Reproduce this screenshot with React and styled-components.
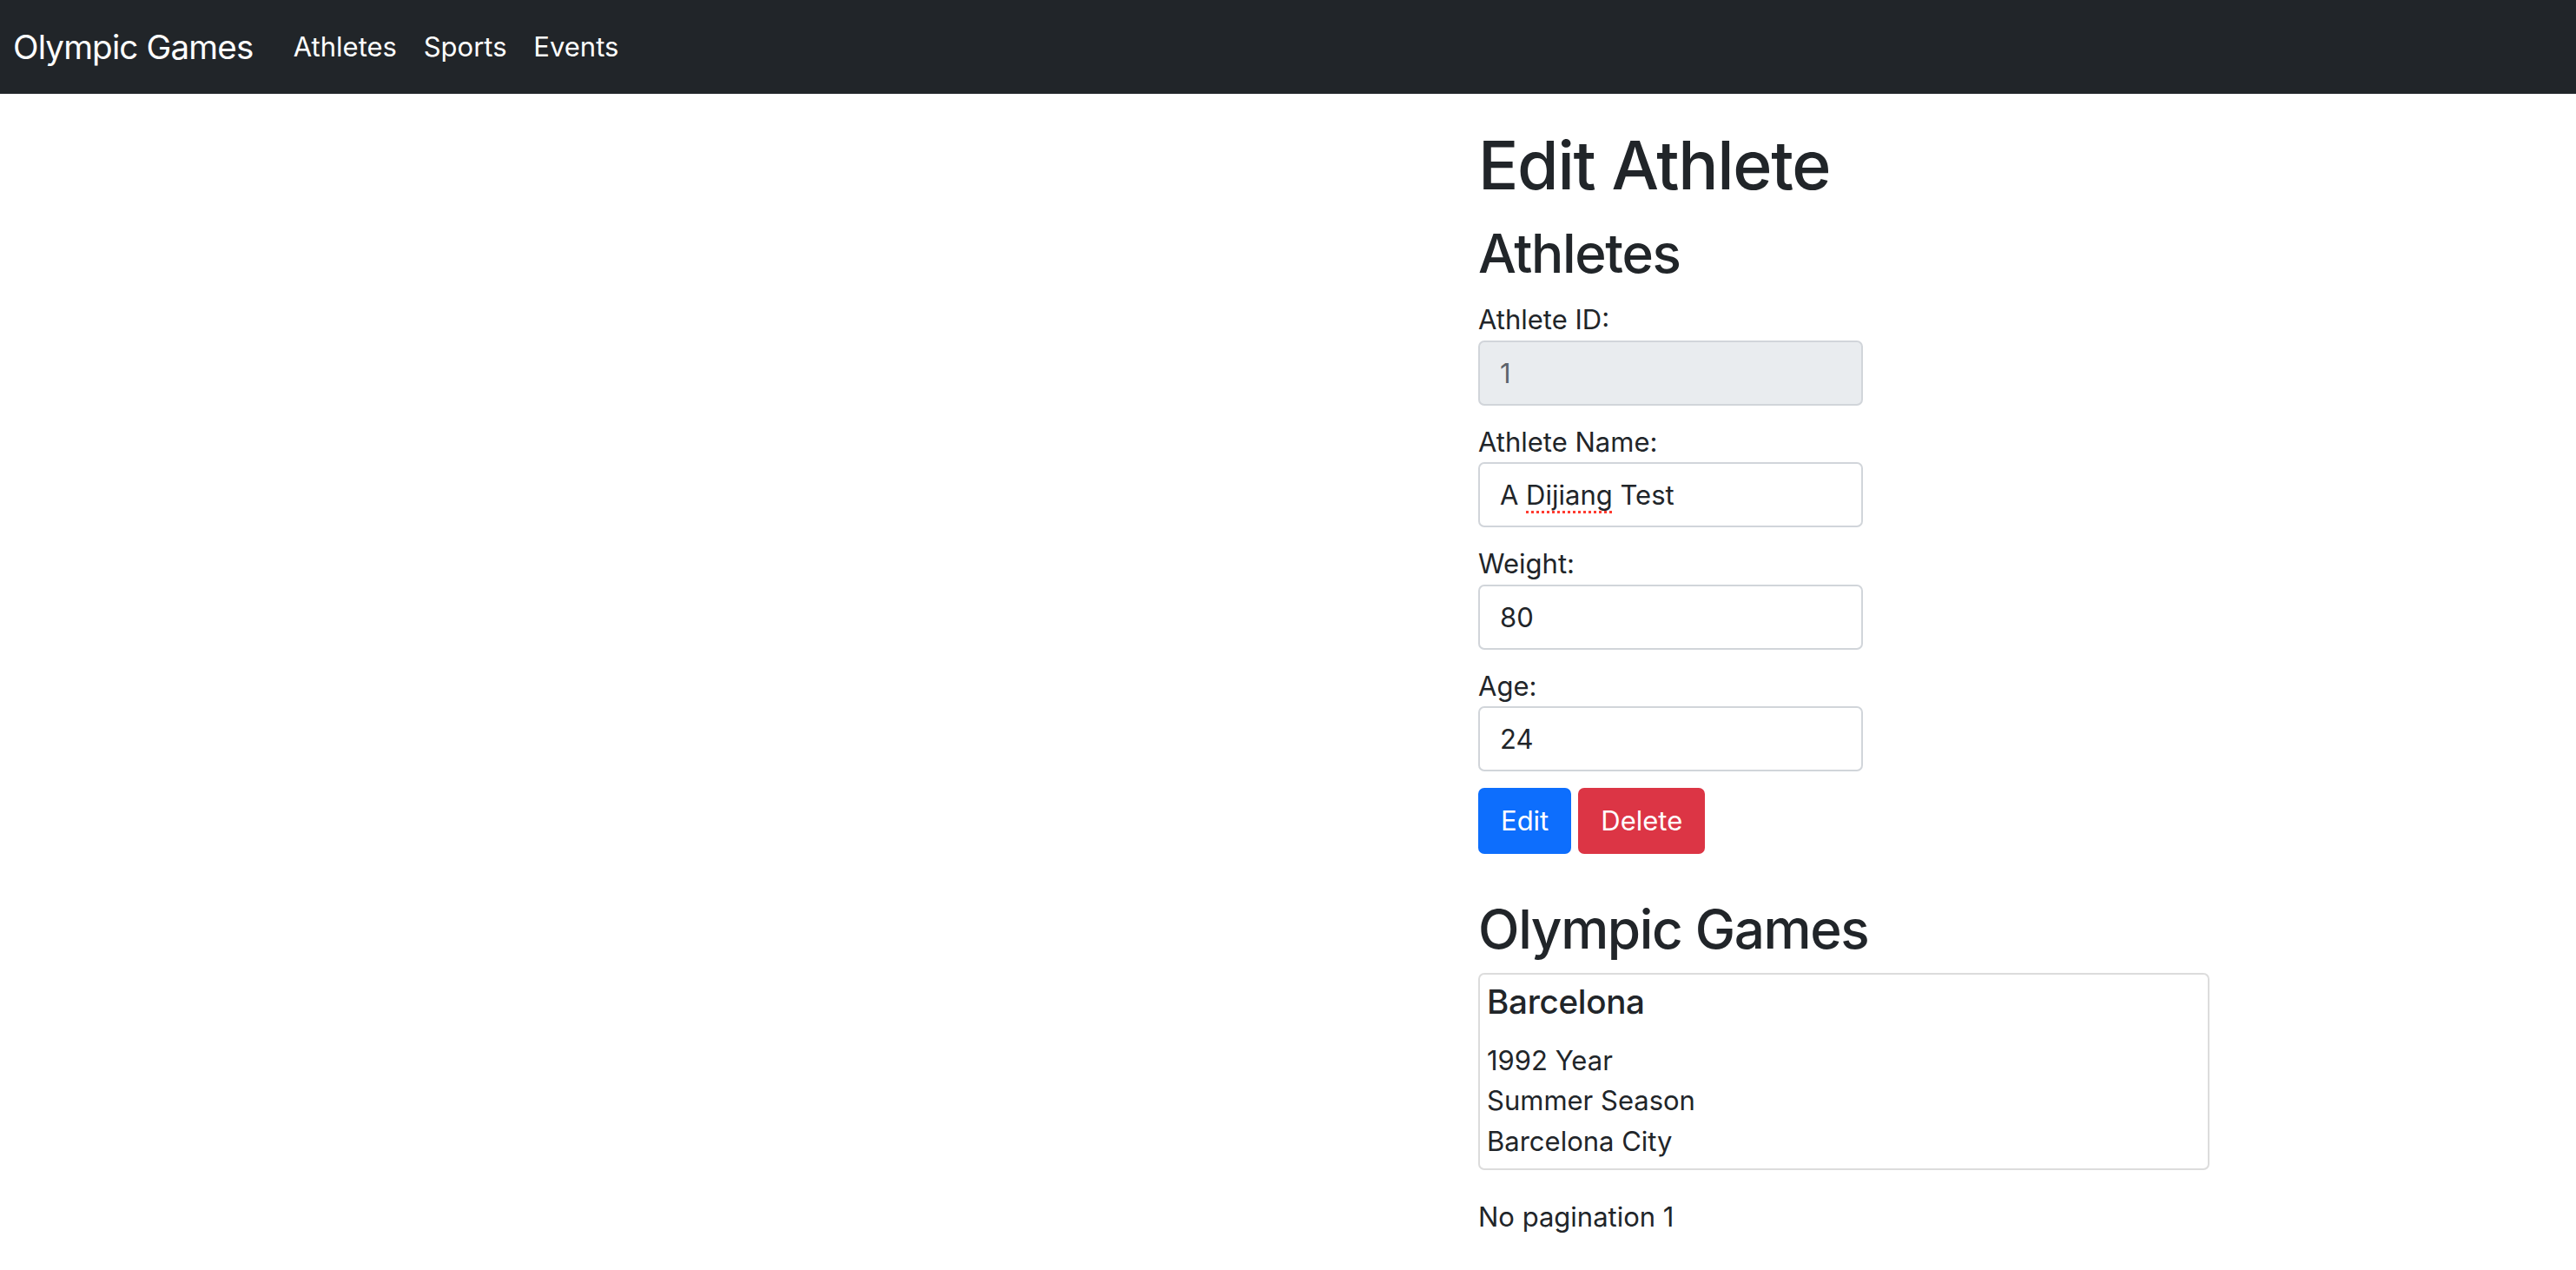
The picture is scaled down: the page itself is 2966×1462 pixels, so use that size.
import React from 'react'
import styled, { createGlobalStyle } from 'styled-components'

const GlobalStyle = createGlobalStyle`
  *, *::before, *::after {
    box-sizing: border-box;
  }

  body {
    margin: 0;
    background: #fff;
    color: #212529;
    font-family: Inter, "Liberation Sans", sans-serif;
    font-size: 31px;
    line-height: 1.5;
  }
`

const Navbar = styled.nav`
  display: flex;
  align-items: center;
  height: 108px;
  padding: 0 15px;
  background-color: #212529;
`

const Brand = styled.a`
  margin-right: 31px;
  color: #fff;
  font-size: 38.6px;
  line-height: 58px;
  letter-spacing: -0.022em;
  text-decoration: none;
`

const NavList = styled.ul`
  display: flex;
  margin: 0;
  padding: 0;
  list-style: none;
`

const NavLink = styled.a`
  display: block;
  padding: 0 15.4px;
  color: #fff;
  font-size: 31px;
  text-decoration: none;
`

const Main = styled.main`
  padding: 36px 0 40px 1702px;
`

const Title = styled.h1`
  margin: 0 0 19px;
  font-size: 77px;
  font-weight: 500;
  line-height: 1.2;
  letter-spacing: -0.017em;
`

const SectionTitle = styled.h2`
  margin: ${(props) => props.$top || 0}px 0 ${(props) => props.$bottom || 15.4}px;
  font-size: 62px;
  font-weight: 500;
  line-height: 1.2;
  letter-spacing: -0.022em;
`

const FieldGroup = styled.div`
  margin-bottom: 19px;
`

const Label = styled.label`
  display: block;
`

const ValueBox = styled.div`
  width: 443px;
  height: 75px;
  padding: 0 23px;
  border: 2px solid #d1d5da;
  border-radius: 7px;
  background-color: ${(props) => (props.$disabled ? '#e9ecef' : '#fff')};
  color: ${(props) => (props.$disabled ? '#5c636a' : '#212529')};
  line-height: 71px;
  white-space: pre;
`

const Misspelled = styled.span`
  text-decoration: underline dotted #ff3b30;
  text-decoration-thickness: 3px;
  text-underline-offset: 7px;
`

const ButtonRow = styled.div`
  display: flex;
  gap: 8px;
  margin-top: 1px;
`

const Button = styled.button`
  height: 76px;
  padding: 0 24px;
  border: 2px solid ${(props) => props.$color};
  border-radius: 7px;
  background-color: ${(props) => props.$color};
  color: #fff;
  font-family: inherit;
  font-size: 31px;
  line-height: 1.5;
  cursor: pointer;
`

const Card = styled.div`
  width: 842px;
  padding: 8px;
  border: 2px solid #dcdcdc;
  border-radius: 7px;
`

const CardTitle = styled.h5`
  margin: 0 0 22px;
  font-size: 38.6px;
  font-weight: 500;
  line-height: 1.2;
  letter-spacing: -0.008em;
`

const CardLine = styled.div`
  line-height: 1.5;
`

const Pagination = styled.p`
  margin: 31px 0 0;
`

const fields = [
  { label: 'Athlete ID:', value: '1', disabled: true },
  {
    label: 'Athlete Name:',
    value: (
      <>
        A <Misspelled>Dijiang</Misspelled> Test
      </>
    ),
  },
  { label: 'Weight:', value: '80' },
  { label: 'Age:', value: '24' },
]

const App = () => {
  return (
    <>
      <GlobalStyle />
      <Navbar>
        <Brand href="#">Olympic Games</Brand>
        <NavList>
          <li>
            <NavLink href="#">Athletes</NavLink>
          </li>
          <li>
            <NavLink href="#">Sports</NavLink>
          </li>
          <li>
            <NavLink href="#">Events</NavLink>
          </li>
        </NavList>
      </Navbar>
      <Main>
        <Title>Edit Athlete</Title>
        <SectionTitle>Athletes</SectionTitle>
        {fields.map((field) => (
          <FieldGroup key={field.label}>
            <Label>{field.label}</Label>
            <ValueBox $disabled={field.disabled}>{field.value}</ValueBox>
          </FieldGroup>
        ))}
        <ButtonRow>
          <Button $color="#0d6efd">Edit</Button>
          <Button $color="#dc3545">Delete</Button>
        </ButtonRow>
        <SectionTitle $top={50} $bottom={12}>
          Olympic Games
        </SectionTitle>
        <Card>
          <CardTitle>Barcelona</CardTitle>
          <CardLine>1992 Year</CardLine>
          <CardLine>Summer Season</CardLine>
          <CardLine>Barcelona City</CardLine>
        </Card>
        <Pagination>No pagination 1</Pagination>
      </Main>
    </>
  )
}

export default App
